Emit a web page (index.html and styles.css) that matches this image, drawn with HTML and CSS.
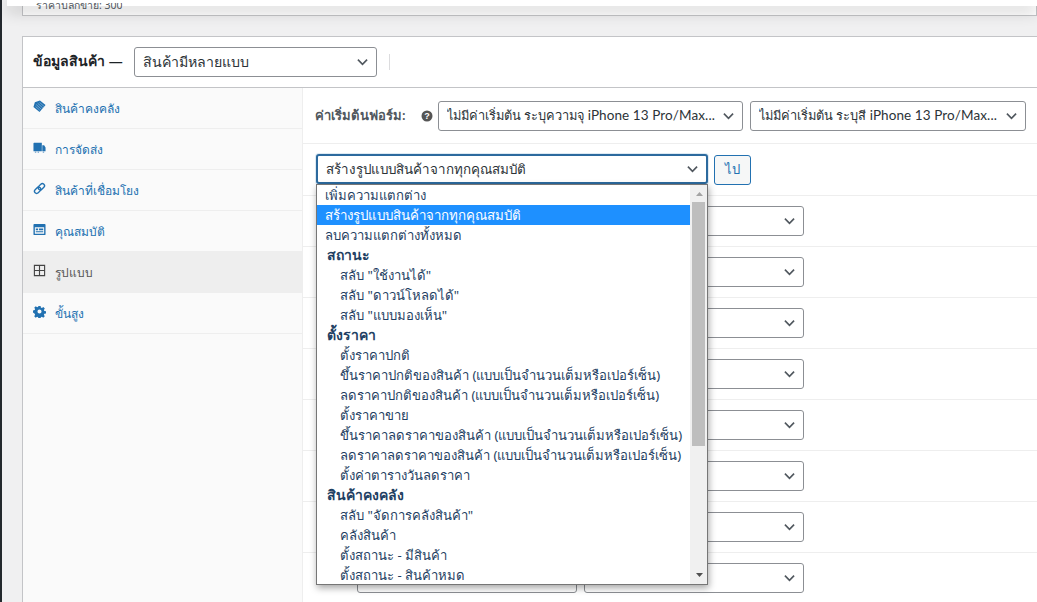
FILE: index.html
```html
<!DOCTYPE html>
<html lang="th">
<head>
<meta charset="utf-8">
<title>ข้อมูลสินค้า</title>
<link rel="stylesheet" href="styles.css">
</head>
<body>
<div class="adminbar"></div>
<aside class="sidebar"></aside>
<main class="main">
  <div class="prev-card"><span class="prev-text">ราคาปลีกขาย: 300</span></div>
  <section class="card">
    <header class="card-head">
      <h2 class="card-title">ข้อมูลสินค้า —</h2>
      <div class="select select-type"><span class="select-text">สินค้ามีหลายแบบ</span><svg class="chev" viewBox="0 0 12 8"><path d="M1 1.500 6 6.500 11 1.500"/></svg></div>
      <span class="divider"></span>
    </header>
    <div class="card-body">
      <nav class="tabs">
        <a class="tab"><svg class="ico" viewBox="0 0 14 14"><path d="M7.500.5 13.500 5.500 7 13 .5 7.500 2 2.500Z"/><path class="cut" d="M3.500 5 9 10M5 3.500l5.500 5M7 2.500l5 4.500M2.800 7l4.500 4"/></svg><span class="tab-label">สินค้าคงคลัง</span></a>
        <a class="tab"><svg class="ico" viewBox="0 0 14 14"><path d="M1.200 2h8.300v9H.5V2.700Q.5 2 1.200 2ZM10 4.500h2l1.500 2.500v4H10Z"/><path d="M2 11.500h1.500v1H2ZM5 11.500h1.500v1H5ZM10.500 11.500H12v1h-1.500Z"/></svg><span class="tab-label">การจัดส่ง</span></a>
        <a class="tab"><svg class="ico ico-line" viewBox="0 0 14 14"><rect x="1.200" y="6.700" width="7.600" height="4.600" rx="2.300" transform="rotate(-45 5 9)"/><rect x="5.200" y="2.700" width="7.600" height="4.600" rx="2.300" transform="rotate(-45 9 5)"/></svg><span class="tab-label">สินค้าที่เชื่อมโยง</span></a>
        <a class="tab"><svg class="ico" viewBox="0 0 14 14"><path fill-rule="evenodd" d="M1.500 1h11q1 0 1 1v10q0 1-1 1h-11q-1 0-1-1V2q0-1 1-1ZM2 4.500V11.500h10V4.500ZM3 6h2.500v1.800H3ZM6.500 6h4.500v1.800H6.500ZM3 8.800h8V10H3Z"/></svg><span class="tab-label">คุณสมบัติ</span></a>
        <a class="tab tab-active"><svg class="ico ico-grid" viewBox="0 0 14 14"><path d="M1.500 1.500h11v11h-11ZM7 1.500v11M1.500 7h11"/></svg><span class="tab-label">รูปแบบ</span></a>
        <a class="tab"><svg class="ico" viewBox="0 0 14 14"><path fill-rule="evenodd" d="M5.800 1h2.400l.3 1.700 1.100.5 1.500-1 1.600 1.700-1 1.400.5 1.200 1.800.3v2.400l-1.800.3-.5 1.100 1 1.500-1.700 1.600-1.400-1-1.200.5-.3 1.800H5.800l-.3-1.800-1.100-.5-1.500 1-1.600-1.700 1-1.400-.5-1.200L0 8V5.800l1.800-.3.500-1.100-1-1.500L3 1.300l1.400 1 1.200-.5ZM7 4.800a2.200 2.200 0 1 0 0 4.400 2.200 2.200 0 0 0 0-4.400Z"/></svg><span class="tab-label">ขั้นสูง</span></a>
      </nav>
      <div class="panel">
        <div class="row row-defaults">
          <strong class="form-label">ค่าเริ่มต้นฟอร์ม:</strong>
          <svg class="help" viewBox="0 0 12 12"><circle cx="6" cy="6" r="5.500"/><text x="6" y="9" text-anchor="middle">?</text></svg>
          <div class="select select-a"><span class="select-text">ไม่มีค่าเริ่มต้น ระบุความจุ <span class="latin">iPhone 13 Pro/Max...</span></span><svg class="chev" viewBox="0 0 12 8"><path d="M1 1.500 6 6.500 11 1.500"/></svg></div>
          <div class="select select-b"><span class="select-text">ไม่มีค่าเริ่มต้น ระบุสี <span class="latin">iPhone 13 Pro/Max...</span></span><svg class="chev" viewBox="0 0 12 8"><path d="M1 1.500 6 6.500 11 1.500"/></svg></div>
        </div>
        <div class="row row-bulk">
          <div class="bulk">
            <div class="select select-focus"><span class="select-text">สร้างรูปแบบสินค้าจากทุกคุณสมบัติ</span><svg class="chev" viewBox="0 0 12 8"><path d="M1 1.500 6 6.500 11 1.500"/></svg></div>
            <div class="listbox">
              <div class="list">
                <div class="opt">เพิ่มความแตกต่าง</div>
                <div class="opt opt-sel">สร้างรูปแบบสินค้าจากทุกคุณสมบัติ</div>
                <div class="opt">ลบความแตกต่างทั้งหมด</div>
                <div class="group">สถานะ</div>
                <div class="opt sub">สลับ "ใช้งานได้"</div>
                <div class="opt sub">สลับ "ดาวน์โหลดได้"</div>
                <div class="opt sub">สลับ "แบบมองเห็น"</div>
                <div class="group">ตั้งราคา</div>
                <div class="opt sub">ตั้งราคาปกติ</div>
                <div class="opt sub">ขึ้นราคาปกติของสินค้า (แบบเป็นจำนวนเต็มหรือเปอร์เซ็น)</div>
                <div class="opt sub">ลดราคาปกติของสินค้า (แบบเป็นจำนวนเต็มหรือเปอร์เซ็น)</div>
                <div class="opt sub">ตั้งราคาขาย</div>
                <div class="opt sub">ขึ้นราคาลดราคาของสินค้า (แบบเป็นจำนวนเต็มหรือเปอร์เซ็น)</div>
                <div class="opt sub">ลดราคาลดราคาของสินค้า (แบบเป็นจำนวนเต็มหรือเปอร์เซ็น)</div>
                <div class="opt sub">ตั้งค่าตารางวันลดราคา</div>
                <div class="group">สินค้าคงคลัง</div>
                <div class="opt sub">สลับ "จัดการคลังสินค้า"</div>
                <div class="opt sub">คลังสินค้า</div>
                <div class="opt sub">ตั้งสถานะ - มีสินค้า</div>
                <div class="opt sub">ตั้งสถานะ - สินค้าหมด</div>
              </div>
              <div class="scroll">
                <svg class="arrow" viewBox="0 0 7 4"><path d="M3.500 0 7 4H0Z"/></svg>
                <div class="thumb"></div>
                <svg class="arrow arrow-down" viewBox="0 0 7 4"><path d="M0 0h7L3.500 4Z"/></svg>
              </div>
            </div>
          </div>
          <button class="go" type="button">ไป</button>
        </div>
        <div class="row row-var"><div class="select select-v"></div><div class="select select-v"><svg class="chev" viewBox="0 0 12 8"><path d="M1 1.500 6 6.500 11 1.500"/></svg></div></div>
        <div class="row row-var"><div class="select select-v"></div><div class="select select-v"><svg class="chev" viewBox="0 0 12 8"><path d="M1 1.500 6 6.500 11 1.500"/></svg></div></div>
        <div class="row row-var"><div class="select select-v"></div><div class="select select-v"><svg class="chev" viewBox="0 0 12 8"><path d="M1 1.500 6 6.500 11 1.500"/></svg></div></div>
        <div class="row row-var"><div class="select select-v"></div><div class="select select-v"><svg class="chev" viewBox="0 0 12 8"><path d="M1 1.500 6 6.500 11 1.500"/></svg></div></div>
        <div class="row row-var"><div class="select select-v"></div><div class="select select-v"><svg class="chev" viewBox="0 0 12 8"><path d="M1 1.500 6 6.500 11 1.500"/></svg></div></div>
        <div class="row row-var"><div class="select select-v"></div><div class="select select-v"><svg class="chev" viewBox="0 0 12 8"><path d="M1 1.500 6 6.500 11 1.500"/></svg></div></div>
        <div class="row row-var"><div class="select select-v"></div><div class="select select-v"><svg class="chev" viewBox="0 0 12 8"><path d="M1 1.500 6 6.500 11 1.500"/></svg></div></div>
        <div class="row row-var"><div class="select select-v"></div><div class="select select-v"><svg class="chev" viewBox="0 0 12 8"><path d="M1 1.500 6 6.500 11 1.500"/></svg></div></div>
      </div>
    </div>
  </section>
</main>
</body>
</html>
```
FILE: styles.css
```css
* { box-sizing: border-box; }
html, body { margin: 0; height: 602px; overflow: hidden; }
body {
  display: flex;
  background: #f0f0f1;
  color: #2c3338;
  font: 13px/20px "Noto Sans", "Open Sans", sans-serif;
}
.adminbar {
  position: absolute;
  top: 0; left: 7px; right: 0;
  height: 6px;
  background: #fff;
  box-shadow: 0 4px 16px rgba(0,0,0,.3);
  z-index: 3;
}
.sidebar { width: 2px; flex: none; background: #23282d; }
.main { flex: 1; min-width: 0; padding-left: 20px; }
.prev-card {
  height: 16px;
  background: #fff;
  border: 1px solid #c3c4c7;
  border-top: 0;
  display: flex;
  align-items: flex-end;
  padding: 0 0 5px 13px;
  font-size: 10.500px;
  line-height: 10px;
  color: #50575e;
}
.prev-text { position: relative; z-index: 4; clip-path: inset(3px 0 0 0); }
.card {
  margin-top: 20px;
  background: #fff;
  border: 1px solid #c3c4c7;
  border-right: 0;
  height: 600px;
}
.card-head {
  display: flex;
  align-items: center;
  height: 51px;
  padding-left: 10px;
  border-bottom: 1px solid #c3c4c7;
}
.card-title { margin: -2px 11px 0 0; font-size: 14px; font-weight: 600; line-height: 20px; color: #1d2327; }
.select {
  display: flex;
  align-items: center;
  justify-content: space-between;
  height: 30px;
  background: #fff;
  border: 1px solid #8c8f94;
  border-radius: 3px;
  padding: 0 8px;
  font-size: 14px;
}
.select-text { white-space: nowrap; overflow: hidden; }
.chev { width: 11px; height: 8px; flex: none; fill: none; stroke: #50575e; stroke-width: 1.800; }
.select-type { width: 243px; font-size: 14.200px; }
.divider { width: 1px; height: 16px; margin-left: 12px; background: #dcdcde; }
.card-body { display: flex; }
.tabs {
  width: 280px;
  flex: none;
  background: #fafafa;
  border-right: 1px solid #eee;
  min-height: 549px;
}
.tab {
  display: flex;
  align-items: center;
  height: 41px;
  padding-left: 10px;
  border-bottom: 1px solid #eee;
  color: #2271b1;
  font-size: 12px;
}
.tab-label { position: relative; top: 1px; }
.tab-active { background: #eee; color: #555; }
.ico { width: 13px; height: 13px; margin-right: 9px; fill: #2271b1; flex: none; position: relative; top: -2px; }
.ico .cut { fill: none; stroke: #9cc0dc; stroke-width: .7; }
.ico-line { fill: none; stroke: #2271b1; stroke-width: 1.500; }
.ico-grid { fill: none; stroke: #444; stroke-width: 1.200; }
.panel { flex: 1; min-width: 0; }
.row { display: flex; align-items: center; border-bottom: 1px solid #eee; }
.row-defaults { height: 56px; padding-left: 12px; }
.form-label { font-weight: 600; color: #50575e; font-size: 13px; letter-spacing: .1px; width: 106px; flex: none; padding-bottom: 2px; }
.help { width: 12px; height: 12px; margin-right: 5px; flex: none; }
.help circle { fill: #555; }
.help text { fill: #fff; font: 700 9px "Liberation Sans", sans-serif; }
.select-a, .select-b { gap: 4px; padding-bottom: 2px; font-size: 12.800px; }
.select-a .chev, .select-b .chev { margin-top: 2px; }
.latin { font-family: Lato, "Noto Sans", sans-serif; font-size: 13.500px; letter-spacing: .1px; }
.select-a { width: 305px; margin-right: 7px; }
.select-b { width: 276px; }
.row-bulk { height: 52px; padding-left: 13px; }
.bulk { position: relative; width: 392px; align-self: flex-start; margin-top: 10px; }
.select-focus { border: 2px solid #2c6a9e; font-size: 13.400px; box-shadow: 0 0 0 1px rgba(34,113,177,.15); }
.go {
  margin-left: 6px;
  width: 37px;
  height: 30px;
  padding: 0;
  background: #f6f7f7;
  border: 1px solid #2271b1;
  border-radius: 3px;
  color: #2271b1;
  font: 13px "Noto Sans", sans-serif;
}
.listbox {
  position: absolute;
  top: 30px; left: 0;
  width: 392px;
  height: 401px;
  background: #fff;
  border: 1px solid #767676;
  box-shadow: 1px 3px 7px rgba(0,0,0,.35);
  display: flex;
  z-index: 2;
  overflow: hidden;
  color: #1f3f63;
}
.list { flex: 1; min-width: 0; }
.opt { height: 20px; padding-left: 8px; line-height: 20px; white-space: nowrap; font-size: 13.100px; }
.opt-sel { background: #1e90ff; color: #fff; font-size: 13.300px; }
.sub { padding-left: 23px; }
.group { height: 20px; padding-left: 10px; font-size: 14px; font-weight: 700; line-height: 20px; }
.scroll {
  position: relative;
  width: 17px;
  flex: none;
  background: #f0f0f0;
}
.thumb { position: absolute; top: 17px; left: 2px; width: 13px; height: 244px; background: #bebebe; }
.arrow { position: absolute; top: 7px; left: 6px; width: 7px; height: 4px; fill: #a3a3a3; }
.arrow-down { top: auto; bottom: 7px; fill: #505050; }
.row-var { height: 51px; padding-left: 54px; gap: 7px; }
.select-v { width: 220px; justify-content: flex-end; }
```
